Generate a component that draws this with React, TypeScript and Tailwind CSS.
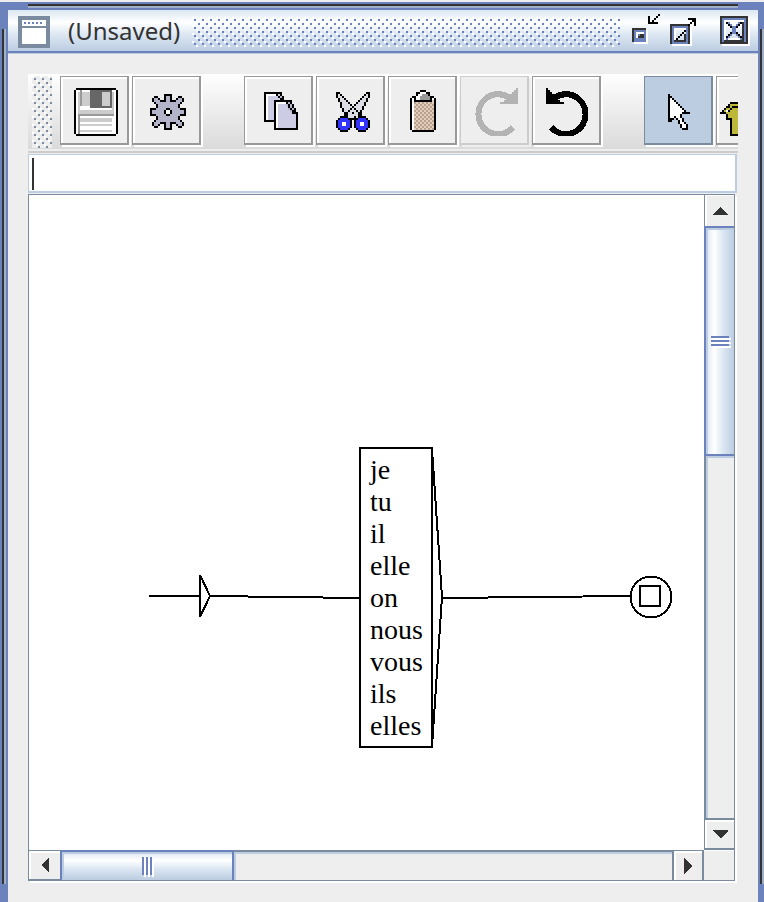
import type { ReactNode } from "react";

const palette: Record<string, string> = {
  K: "#000000",
  W: "#ffffff",
  C: "#cccce4",
  L: "#b3b3c9",
  G: "#dcdce4",
  B: "#3333ff",
  Y: "#bdb83a",
  T: "#e3cdb8",
  N: "#b8a18e",
  S: "#cccccc",
  D: "#999999",
  M: "#666666",
  U: "#6b82bd",
  E: "#333333",
};

/** Draws rows of palette letters as square cells; a dot is transparent. */
function Pixels({ rows, x = 0, y = 0 }: { rows: string[]; x?: number; y?: number }) {
  return (
    <>
      {rows.flatMap((row, r) =>
        Array.from(row.matchAll(/([A-Z])\1*/g)).map((run) => (
          <rect
            key={`${r}-${run.index}`}
            x={x + (run.index ?? 0)}
            y={y + r}
            width={run[0].length}
            height={1}
            fill={palette[run[1]]}
          />
        )),
      )}
    </>
  );
}

const mirror = (quadrant: string[]) => {
  const half = quadrant.map((row) => row + row.split("").reverse().join(""));
  return [...half, ...half.slice().reverse()];
};

const gear = mirror([
  ".......KK",
  "..KK...KL",
  ".KLLK..KL",
  ".KLLLKKKL",
  "..KLLLLLL",
  "...KLLLLL",
  "...KLLLLL",
  "KKKLLLLLK",
  "KLLLLLLKW",
]);

const copy = [
  "KKKKKKKKK........",
  "KWWWWWKCK........",
  "KWCCCCCKLK.......",
  "KWCCCCCCKK.......",
  "KWCCCKKKKKKKKK...",
  "KWCCCKWWWWWKLK...",
  "KWCCCKWCCCCLKLK..",
  "KWCCCKWCCCCCKLK..",
  "KWCCCKWCCCCCLKLK.",
  "KWCCCKWCCCCCCLKK.",
  "KWCCCKWCCCCCCCKKK",
  "KWCCCKWCCCCCCCCCK",
  "KWCCCKWCCCCCCCCCK",
  "KWCCCKWCCCCCCCCCK",
  "KKKKKKWCCCCCCCCCK",
  ".....KWCCCCCCCCCK",
  ".....KWCCCCCCCCCK",
  ".....KWCCCCCCCCCK",
  ".....KKKKKKKKKKKK",
];

const scissors = [
  "KK.............KK",
  "KGK...........KGK",
  "KGGK.........KGGK",
  ".KGGK.......KGGK.",
  ".KGGGK.....KGGGK.",
  "..KGGGK...KGGGK..",
  "..KGGGGK.KGGGGK..",
  "..KGGGGGKGGGGK...",
  "...KGGGKGKGGGK...",
  "...KGGKGGGKGK....",
  "....KKGGKGGKK....",
  "....KKGGGGGKK....",
  "..KKKKGGGKGKKKK..",
  ".KBBBBKKKKKBBBBK.",
  "KBBBBBBK.KBBBBBBK",
  "KBBWWBBK.KBBWWBBK",
  "KBBWWBBK.KBBWWBBK",
  "KBBBBBBK.KBBBBBBK",
  ".KBBBBK...KBBBBK.",
  "..KKKK.....KKKK..",
];

const paste = [
  ".....KKK.....",
  "...KKWWWKK...",
  "...KWWDDDK...",
  ".KKWWDDDDDKK.",
  "KWKWWDDDDDKWK",
  "KWKKKKKKKKKTK",
  ...Array.from({ length: 14 }, (_, i) => (i % 2 ? "KWTNTNTNTNTNK" : "KWNTNTNTNTNTK")),
  ".KKKKKKKKKKK.",
];

const pointer = [
  "K..........",
  "KK.........",
  "KWK........",
  "KWWK.......",
  "KWWWK......",
  "KWWWWK.....",
  "KWWWWWK....",
  "KWWWWWWK...",
  "KWWWWWWWK..",
  "KWWWWWWKKKK",
  "KWWWWWK....",
  "KWWKWWK....",
  "KKK.KWWK...",
  "KK...KWK...",
  ".....KWWK..",
  "......KWWK.",
  "......KWWK.",
  ".......KKK.",
];

const upArrow = [
  ".....KKKKK.....",
  "....KYYYYYK....",
  "...KKYKKKYKK...",
  "..KYYKYYYKYYK..",
  ".KYWKYYYYYKYYK.",
  "KKKYYYYYYYYYKKK",
  "...KYYYYYYYK...",
  "...KYYYYYYYK...",
  "...KKKYYYKKK...",
  ".....KYYYK.....",
  ".....KYYYK.....",
  ".....KYYYK.....",
  ".....KYYYK.....",
  ".....KYYYK.....",
  ".....KYYYK.....",
  ".....KYYYK.....",
  ".....KKKKK.....",
];

const closeBox = [
  "EEEEEEEEEEEEEE.",
  "EUUUUUUUUUUUUEW",
  "EUWWWWWWWWWWUEW",
  "EUWKU....UKEUEW",
  "EUW.KU..UK.EUEW",
  "EUW..KUUK..EUEW",
  "EUW...UU...EUEW",
  "EUW...UU...EUEW",
  "EUW..KUUK..EUEW",
  "EUW.KU..UK.EUEW",
  "EUWKU....UKEUEW",
  "EUWUWWWWWWUEUEW",
  "EUEEEEEEEEEEUEW",
  "EEEEEEEEEEEEEEW",
  ".WWWWWWWWWWWWWW",
];

const minimizeBox = [
  ".............K",
  "........K...K.",
  "........K..K..",
  "........K.K...",
  "........KKKKK.",
  "..............",
  "..............",
  "EEEEEEE.......",
  "EUUUUUUW......",
  "EUWWWWUW......",
  "EUWUEEUW......",
  "EUWEEEUW......",
  "EUUUUUUW......",
  "EUUUUUUW......",
  ".WWWWWWW......",
];

const maximizeBox = [
  ".........KKKK.",
  "...........KK.",
  "..........K.K.",
  "EEEEEEEEEK..K.",
  "EUUUUUUUUEW...",
  "EUWWWWWWUEW...",
  "EUW....KUEW...",
  "EUW...K.UEW...",
  "EUW..K.EUEW...",
  "EUW.K..EUEW...",
  "EUWK...EUEW...",
  "EUEEEEEEUEW...",
  "EUUUUUUUUEW...",
  ".WWWWWWWWWW...",
];

function Icon({ children }: { children: ReactNode }) {
  return (
    <svg viewBox="0 0 24 24" className="size-12 shrink-0" shapeRendering="crispEdges" aria-hidden="true">
      {children}
    </svg>
  );
}

function DiskIcon() {
  return (
    <Icon>
      <path d="M2 0h20v1h1v22h-1v1H2v-1H1V1h1z" fill="#000" />
      <path d="M2 1h20v22H2z" fill="#fff" />
      <path d="M3 2h2v10H3zM3 11h18v2H3zM20 2h1v10h-1z" fill="#ccc" />
      <path d="M4 1h1v8H4zM3 13h18v1H3zM3 14h1v9H3z" fill="#999" />
      <path d="M5 2h4v7H5z" fill="#ccc" />
      <path d="M9 1h11v9H9z" fill="#666" />
      <path d="M15 2h4v7h-4z" fill="#ccc" />
      <path d="M4 9h5v2H4zM9 10h11v1H9z" fill="#fff" />
      <path d="M4 15h16v2H4zM4 18h16v1H4zM4 21h16v1H4z" fill="#ccc" />
    </Icon>
  );
}

function TurnIcon({ color, flipped = false }: { color: string; flipped?: boolean }) {
  return (
    <Icon>
      <g transform={flipped ? "translate(24 0) scale(-1 1)" : undefined}>
        <path d="M5.2 5 A9.8 10 0 1 1 3.6 19.7" fill="none" stroke={color} strokeWidth="3" />
        <path d="M1 0h1v1h1v1h1v1h1v1h1v1h1v1h1v1h2v1H1z" fill={color} />
      </g>
    </Icon>
  );
}

/** Diagonal bump texture used on drag handles. */
function Bumps({ id, dot, className }: { id: string; dot: string; className: string }) {
  return (
    <svg className={className} shapeRendering="crispEdges" aria-hidden="true">
      <defs>
        <pattern id={id} width="8" height="8" patternUnits="userSpaceOnUse">
          <path d="M0 0h2v2H0zM4 4h2v2H4z" fill="#fff" />
          <path d="M2 2h2v2H2zM6 6h2v2H6z" fill={dot} />
        </pattern>
      </defs>
      <rect width="100%" height="100%" fill={`url(#${id})`} />
    </svg>
  );
}

function ToolButton({
  label,
  children,
  selected = false,
  disabled = false,
}: {
  label: string;
  children: ReactNode;
  selected?: boolean;
  disabled?: boolean;
}) {
  const look = selected
    ? "border-[#7a8a9f] bg-[#bccde1] shadow-[2px_2px_0_#ffffff]"
    : disabled
      ? "border-[#cccccc] bg-[#eeeeee] shadow-[2px_2px_0_#eeeeee]"
      : "border-[#999999] bg-[#eeeeee] shadow-[inset_2px_2px_0_#ffffff,2px_2px_0_#ffffff]";
  return (
    <button
      type="button"
      aria-label={label}
      aria-pressed={selected}
      disabled={disabled}
      className={`flex h-[69px] w-[69px] shrink-0 items-start border-t border-r-2 border-b-2 border-l pt-[11px] pl-[11px] ${look}`}
    >
      {children}
    </button>
  );
}

function TitleBar() {
  return (
    <header className="flex h-11 items-start border-b border-[#bccde1] bg-[#6b82bd] pb-[2px]">
      <div className="flex h-[41px] w-full items-start bg-[linear-gradient(to_bottom,#dce7f2,#ffffff_30%,#dce7f2_60%,#bccde1)] pr-2 pl-[10px]">
        <svg viewBox="0 0 16 16" className="mt-[6px] size-8 shrink-0" shapeRendering="crispEdges" aria-hidden="true">
          <path d="M0 0h16v16H0z" fill="#7a8a9f" />
          <path d="M2 2h12v3H2zM2 6h12v8H2z" fill="#fff" />
          <path d="M3 3h1v1H3zM5 3h1v1H5zM7 3h1v1H7zM9 3h1v1H9zM11 3h1v1h-1z" fill="#6b82bd" />
        </svg>
        <h1 className="ml-[18px] shrink-0 font-['Noto_Sans',sans-serif] text-[24px] leading-[42px] text-[#333333]">
          (Unsaved)
        </h1>
        <Bumps id="title-bumps" dot="#6b82bd" className="mt-[7px] ml-3 h-[30px] min-w-0 flex-1" />
        <div className="mt-1 ml-3 flex shrink-0">
          <button type="button" aria-label="Minimize" className="mr-[10px]">
            <svg viewBox="0 0 14 16" width="28" height="32" shapeRendering="crispEdges" aria-hidden="true">
              <Pixels rows={minimizeBox} />
            </svg>
          </button>
          <button type="button" aria-label="Maximize" className="mr-[22px]">
            <svg viewBox="0 0 14 16" width="28" height="32" shapeRendering="crispEdges" aria-hidden="true">
              <Pixels rows={maximizeBox} y={2} />
            </svg>
          </button>
          <button type="button" aria-label="Close">
            <svg viewBox="0 0 15 16" width="30" height="32" shapeRendering="crispEdges" aria-hidden="true">
              <Pixels rows={closeBox} y={1} />
            </svg>
          </button>
        </div>
      </div>
    </header>
  );
}

function Toolbar() {
  return (
    <div
      role="toolbar"
      aria-label="Graph tools"
      className="flex h-[75px] items-start overflow-hidden bg-[linear-gradient(to_bottom,#ffffff,#dadada)] pt-[2px] pl-1"
    >
      <div className="mr-2 h-[72px] w-5 shrink-0 bg-[#eeeeee]">
        <Bumps id="grip-bumps" dot="#7a8a9f" className="h-full w-full" />
      </div>
      <div className="mr-[43px] flex shrink-0 gap-[3px]">
        <ToolButton label="Save">
          <DiskIcon />
        </ToolButton>
        <ToolButton label="Compile">
          <Icon>
            <Pixels rows={gear} x={3} y={3} />
          </Icon>
        </ToolButton>
      </div>
      <div className="mr-[43px] flex shrink-0 gap-[3px]">
        <ToolButton label="Copy">
          <Icon>
            <Pixels rows={copy} x={4} y={2} />
          </Icon>
        </ToolButton>
        <ToolButton label="Cut">
          <Icon>
            <Pixels rows={scissors} x={4} y={2} />
          </Icon>
        </ToolButton>
        <ToolButton label="Paste">
          <Icon>
            <Pixels rows={paste} x={5} y={1} />
          </Icon>
        </ToolButton>
        <ToolButton label="Redo" disabled>
          <TurnIcon color="#b3b3b3" flipped />
        </ToolButton>
        <ToolButton label="Undo">
          <TurnIcon color="#000000" />
        </ToolButton>
      </div>
      <div className="flex shrink-0 gap-[3px]">
        <ToolButton label="Select" selected>
          <Icon>
            <Pixels rows={pointer} x={6} y={3} />
          </Icon>
        </ToolButton>
        <ToolButton label="Reverse arrow">
          <svg viewBox="-2 0 24 24" className="-ml-2 size-12 shrink-0" shapeRendering="crispEdges" aria-hidden="true">
            <Pixels rows={upArrow} x={-2} y={7} />
          </svg>
        </ToolButton>
      </div>
    </div>
  );
}

const pronouns = ["je", "tu", "il", "elle", "on", "nous", "vous", "ils", "elles"];

function GraphCanvas() {
  return (
    <main className="relative min-w-0 overflow-hidden bg-white">
      <svg className="absolute inset-0 h-full w-full" fill="none" stroke="#000" strokeWidth="2" shapeRendering="crispEdges" aria-hidden="true">
        <path d="M120 401H171M181 401L331 403" />
        <path d="M171 380V422L181 401Z" />
        <path d="M403 254L413 402L403 552" />
        <path d="M413 403L601 401" />
        <circle cx="622" cy="402" r="20.5" />
        <path d="M611 391H631V411H611Z" />
      </svg>
      <ul className="absolute top-[252px] left-[330px] w-[74px] border-2 border-black bg-white pt-[5px] pb-1 pl-[9px] font-['Liberation_Serif',serif] text-[28px] leading-8 text-black">
        {pronouns.map((word) => (
          <li key={word}>{word}</li>
        ))}
      </ul>
    </main>
  );
}

function Arrow({ d, label }: { d: string; label: string }) {
  return (
    <svg viewBox="0 0 16 16" className="size-4 shrink-0" role="img" aria-label={label} shapeRendering="crispEdges">
      <path d={d} fill="#333" />
    </svg>
  );
}

function VerticalScrollbar() {
  return (
    <div className="flex min-h-0 flex-col">
      <button type="button" className="flex h-[31px] shrink-0 items-center justify-center border-l border-[#7a8a9f] bg-[#eeeeee] shadow-[inset_2px_1px_0_#ffffff]">
        <Arrow label="Scroll up" d="M0 12L8 4L16 12Z" />
      </button>
      <div className="flex h-[230px] shrink-0 flex-col items-center justify-center gap-[2px] border-y-2 border-l-2 border-[#6b82bd] bg-[linear-gradient(to_right,#dce7f2,#ffffff_30%,#dce7f2_60%,#bccde1)] shadow-[inset_2px_2px_0_#bccde1]">
        <span className="h-[2px] w-[18px] bg-[#6b82bd] shadow-[2px_2px_0_#ffffff]" />
        <span className="h-[2px] w-[18px] bg-[#6b82bd] shadow-[2px_2px_0_#ffffff]" />
        <span className="h-[2px] w-[18px] bg-[#6b82bd] shadow-[2px_2px_0_#ffffff]" />
      </div>
      <div className="min-h-0 flex-1 border-l-2 border-[#7a8a9f] bg-[#eeeeee] shadow-[inset_2px_2px_0_#bccde1]" />
      <button type="button" className="flex h-8 shrink-0 items-center justify-center border-t-2 border-b-2 border-l border-[#7a8a9f] bg-[#eeeeee] shadow-[inset_2px_2px_0_#ffffff]">
        <Arrow label="Scroll down" d="M0 4H18L9 12Z" />
      </button>
    </div>
  );
}

function HorizontalScrollbar() {
  return (
    <div className="flex min-w-0">
      <button type="button" className="flex w-[31px] shrink-0 items-center justify-center border-t border-b border-[#7a8a9f] bg-[#eeeeee] shadow-[inset_2px_2px_0_#ffffff]">
        <Arrow label="Scroll left" d="M12 0V16L4 8Z" />
      </button>
      <div className="flex w-[174px] shrink-0 items-center justify-center gap-[2px] border-x-2 border-t-2 border-[#6b82bd] bg-[linear-gradient(to_bottom,#dce7f2,#ffffff_30%,#dce7f2_60%,#bccde1)] shadow-[inset_2px_2px_0_#bccde1]">
        <span className="h-[18px] w-[2px] bg-[#6b82bd] shadow-[2px_2px_0_#ffffff]" />
        <span className="h-[18px] w-[2px] bg-[#6b82bd] shadow-[2px_2px_0_#ffffff]" />
        <span className="h-[18px] w-[2px] bg-[#6b82bd] shadow-[2px_2px_0_#ffffff]" />
      </div>
      <div className="min-w-0 flex-1 border-t-2 border-[#7a8a9f] bg-[#eeeeee] shadow-[inset_2px_2px_0_#bccde1]" />
      <button type="button" className="flex w-8 shrink-0 items-center justify-center border-t border-r-2 border-l-2 border-[#7a8a9f] bg-[#eeeeee] shadow-[inset_2px_2px_0_#ffffff]">
        <Arrow label="Scroll right" d="M4 0L12 8L4 16Z" />
      </button>
    </div>
  );
}

function SideRail() {
  return (
    <div className="flex w-2 shrink-0 bg-[#6b82bd] pt-[19px] pb-[18px] pl-[2px]">
      <div className="w-[2px] bg-[#333333]" />
      <div className="w-[2px] bg-[#9fb0c6]" />
    </div>
  );
}

export default function App() {
  return (
    <div className="flex h-screen min-h-[640px] flex-col overflow-hidden bg-[#eeeeee] pt-[2px]">
      <div className="h-2 shrink-0 bg-[#6b82bd] pt-[2px] pr-[26px] pl-7">
        <div className="h-[2px] bg-[#333333]" />
        <div className="h-[2px] bg-[#9fb0c6]" />
      </div>
      <div className="-mr-[2px] flex min-h-0 flex-1">
        <SideRail />
        <div className="flex min-w-0 flex-1 flex-col">
          <TitleBar />
          <div className="flex min-h-0 flex-1 flex-col pt-5 pr-5 pb-[21px] pl-5">
            <Toolbar />
            <div className="mt-[2px] h-[2px] shrink-0 bg-[#cccccc]" />
            <div className="relative mt-px mr-px shrink-0">
              <input
                type="text"
                aria-label="Box content"
                className="block h-[39px] w-full border-t border-r-2 border-b-2 border-l border-[#bccde1] bg-white px-1 font-['Liberation_Serif',serif] text-[28px] outline-none"
              />
              <span className="absolute top-1 left-1 h-8 w-[2px] bg-[#333333]" />
            </div>
            <div className="mt-px mr-[3px] grid min-h-0 flex-1 grid-cols-[minmax(0,1fr)_30px] grid-rows-[minmax(0,1fr)_30px] border border-[#7a8a9f] shadow-[2px_2px_0_#ffffff]">
              <GraphCanvas />
              <VerticalScrollbar />
              <HorizontalScrollbar />
              <div className="bg-[#eeeeee] shadow-[inset_0_1px_0_#ffffff]" />
            </div>
          </div>
        </div>
        <SideRail />
      </div>
    </div>
  );
}
